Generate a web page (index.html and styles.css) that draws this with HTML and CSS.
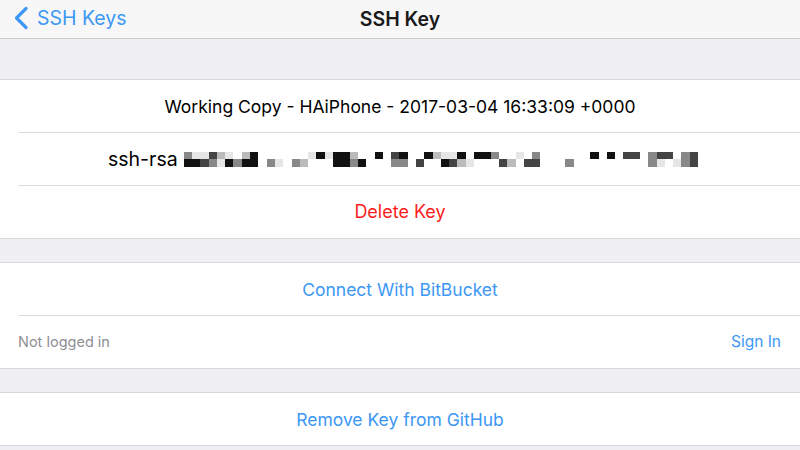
FILE: index.html
```html
<!DOCTYPE html>
<html lang="en">
<head>
<meta charset="utf-8">
<title>SSH Key</title>
<link rel="stylesheet" href="styles.css">
</head>
<body>
<header class="nav">
  <a class="back" href="#">
    <svg class="chev" width="16" height="24" viewBox="0 0 16 24"><path d="M13 2.5 L3.5 12 L13 21.5" fill="none" stroke="#3c97f5" stroke-width="3.2" stroke-linecap="round" stroke-linejoin="round"/></svg>
    <span>SSH Keys</span>
  </a>
  <h1 class="title">SSH Key</h1>
</header>
<main class="page">
  <div class="gap gap-top"></div>
  <section class="group">
    <div class="row center">Working Copy - HAiPhone - 2017-03-04 16:33:09 +0000</div>
    <div class="row center key"><span class="rsa">ssh-rsa</span><span class="pix">
      <i class="k3"></i><i class="k1"></i><i class="k5"></i><i class="k1"></i><i class="k5"></i><i class="k2"></i><i class="k2"></i><i class="k3"></i><i class="k4"></i><i class="k5"></i><i class="k5"></i><i class="k1"></i><i></i><i class="k3"></i><i class="k4"></i><i class="k1"></i><i class="k1"></i><i class="k1"></i><i></i><i></i><i></i><i class="k3"></i><i></i><i class="k5"></i><i></i><i></i><i></i><i class="k3"></i><i></i><i class="k4"></i><i class="k5"></i><i></i><i class="k1"></i><i></i><i class="k5"></i><i></i><i class="k1"></i><i class="k1"></i><i class="k1"></i><i class="k1"></i><i class="k4"></i><i class="k3"></i><i></i><i class="k1"></i><i></i><i></i><i class="k1"></i><i></i><i></i><i></i><i class="k2"></i><i class="k3"></i><i class="k1"></i><i class="k3"></i><i></i><i></i><i></i><i class="k2"></i><i class="k1"></i><i></i><i class="k4"></i><i></i><i class="k5"></i><i class="k1"></i><i class="k5"></i><i class="k2"></i><i class="k1"></i><i class="k4"></i><i></i><i class="k5"></i><i class="k1"></i><i></i><i class="k1"></i><i></i><i class="k3"></i><i></i><i></i><i class="k2"></i><i></i><i class="k4"></i><i class="k5"></i><i></i><i></i><i class="k2"></i><i class="k3"></i><i class="k2"></i><i></i><i></i><i></i><i></i><i></i><i></i><i></i><i class="k3"></i><i></i><i></i><i></i><i></i><i class="k1"></i><i></i><i></i><i></i><i class="k1"></i><i></i><i></i><i></i><i class="k2"></i><i></i><i class="k2"></i><i></i><i></i><i></i><i class="k3"></i><i class="k3"></i><i class="k2"></i><i class="k5"></i><i class="k2"></i><i></i><i></i><i class="k5"></i><i class="k3"></i><i class="k3"></i><i class="k2"></i><i class="k2"></i>
    </span></div>
    <div class="row center danger">Delete Key</div>
  </section>
  <div class="gap"></div>
  <section class="group">
    <div class="row center link">Connect With BitBucket</div>
    <div class="row split"><span class="muted">Not logged in</span><span class="link small">Sign In</span></div>
  </section>
  <div class="gap"></div>
  <section class="group">
    <div class="row center link">Remove Key from GitHub</div>
  </section>
  <div class="gap"></div>
</main>
</body>
</html>
```

FILE: styles.css
```css
* { box-sizing: border-box; margin: 0; padding: 0; }
html, body { width: 800px; height: 450px; overflow: hidden; }
body {
  background: #efeff4;
  font-family: Inter, "Noto Sans", "Liberation Sans", sans-serif;
  color: #000;
  -webkit-font-smoothing: antialiased;
}
.nav {
  height: 39px;
  background: #f7f7f7;
  border-bottom: 1px solid #c9c9cc;
  display: flex;
  align-items: center;
  justify-content: center;
  position: relative;
}
.back {
  position: absolute;
  left: 13px;
  top: 6px;
  display: flex;
  align-items: center;
  gap: 8px;
  color: #3c97f5;
  text-decoration: none;
  font-size: 19.5px;
}
.chev { display: block; }
.title {
  font-size: 19.5px;
  font-weight: 600;
  color: #1a1a1a;
}
.gap { height: 23px; }
.gap-top { height: 40px; }
.group {
  background: #fff;
  border-top: 1px solid #d8d8dc;
  border-bottom: 1px solid #d8d8dc;
}
.row {
  height: 53px;
  display: flex;
  align-items: center;
  font-size: 17.5px;
  position: relative;
}
.row + .row::before {
  content: "";
  position: absolute;
  left: 18px;
  right: 0;
  top: 0;
  border-top: 1px solid #dcdce0;
}
.group .row:first-child { height: 52px; }
.center { justify-content: center; }
.split { justify-content: space-between; padding: 0 19px 0 18px; }
.key { justify-content: flex-start; padding-left: 108px; }
.rsa { font-size: 19.5px; margin-right: 6px; }
.pix {
  display: inline-grid;
  grid-template-rows: 7px 8px;
  grid-auto-flow: column;
  grid-auto-columns: 8.3px;
  margin-top: 1px;
}
.pix i { display: block; }
.k1 { background: #111; }
.k2 { background: #444; }
.k3 { background: #888; }
.k4 { background: #bbb; }
.k5 { background: #e6e6e6; }
.danger { color: #fb1d1d; font-size: 18px; }
.link { color: #3c97f5; }
.muted { color: #8e8e93; font-size: 14.5px; }
.small { font-size: 15.5px; }
```
